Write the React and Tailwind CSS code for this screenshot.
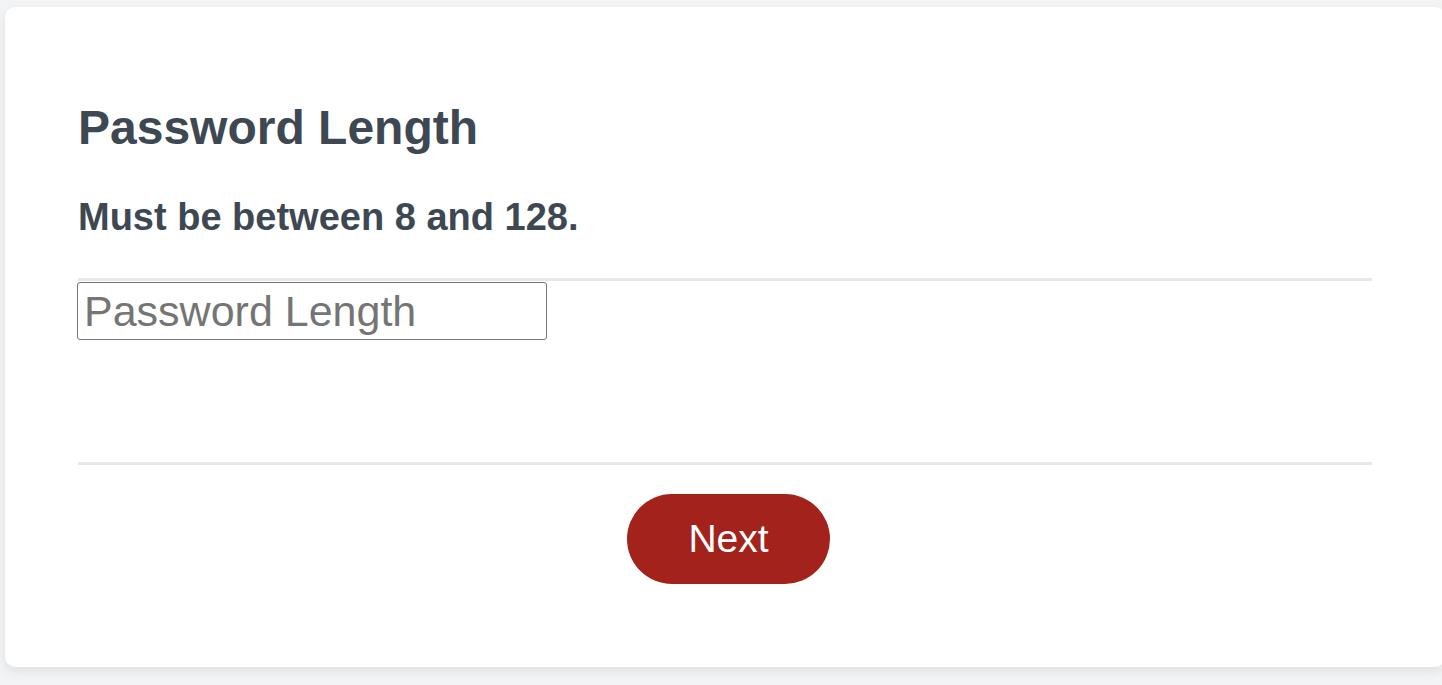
const App = () => {
    return (
        <div
            className="min-h-screen bg-[#f3f4f6] pt-[7px] pl-[5px] overflow-hidden"
            style={{ fontFamily: '"Liberation Sans", Arial, sans-serif' }}
        >
            <div className="w-[1440px] h-[660px] bg-white rounded-[10px] shadow-[0_4px_12px_rgba(0,0,0,0.09)] pt-[93px] px-[73px]">
                <h1 className="text-[48px] leading-[56px] font-bold text-[#3d4852]">
                    Password Length
                </h1>
                <h2 className="mt-[39px] text-[38px] leading-[44px] font-bold text-[#3d4852]">
                    Must be between 8 and 128.
                </h2>

                <div className="mt-[39px] w-[1294px] h-[3px] bg-[#e6e7ea]" />
                <input
                    type="text"
                    placeholder="Password Length"
                    className="block mt-[1px] -ml-[1px] w-[470px] h-[58px] border border-[#767676] rounded-[3px] px-[6px] text-[43px] text-[#333] placeholder:text-[#757575] outline-none"
                />

                <div className="mt-[122px] w-[1294px] h-[3px] bg-[#e6e7ea]" />

                <div className="w-[1294px] flex justify-center pl-[7px] mt-[29px]">
                    <button className="w-[203px] h-[90px] rounded-full bg-[#a3221b] text-white text-[39px]">
                        Next
                    </button>
                </div>
            </div>
        </div>
    );
};

export default App;
